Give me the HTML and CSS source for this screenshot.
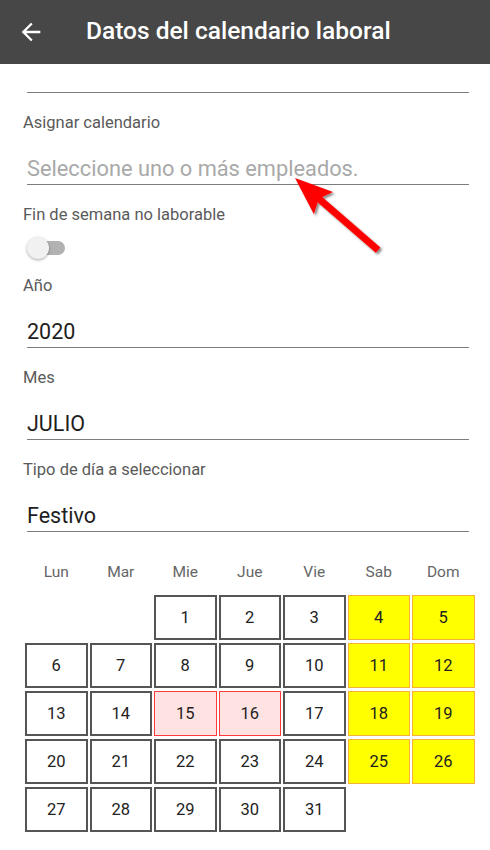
FILE: index.html
```html
<!DOCTYPE html>
<html lang="es">
<head>
<meta charset="utf-8">
<title>Datos del calendario laboral</title>
<link rel="stylesheet" href="styles.css">
</head>
<body>
<header class="appbar">
  <svg class="back" viewBox="0 0 24 24" width="28" height="28"><path fill="#fff" d="M20 11H7.83l5.59-5.59L12 4l-8 8 8 8 1.41-1.41L7.83 13H20v-2z"/></svg>
  <h1 class="title">Datos del calendario laboral</h1>
</header>
<main class="form">
  <div class="input empty"></div>

  <div class="label">Asignar calendario</div>
  <div class="input placeholder">Seleccione uno o más empleados.</div>

  <div class="label">Fin de semana no laborable</div>
  <div class="switch-row"><span class="switch"><span class="track"></span><span class="thumb"></span></span></div>

  <div class="label">Año</div>
  <div class="input">2020</div>

  <div class="label">Mes</div>
  <div class="input">JULIO</div>

  <div class="label">Tipo de día a seleccionar</div>
  <div class="input">Festivo</div>

  <div class="calendar">
    <div class="dow">Lun</div><div class="dow">Mar</div><div class="dow">Mie</div><div class="dow">Jue</div><div class="dow">Vie</div><div class="dow">Sab</div><div class="dow">Dom</div>
    <div class="blank"></div><div class="blank"></div>
    <div class="day">1</div><div class="day">2</div><div class="day">3</div><div class="day wk">4</div><div class="day wk">5</div>
    <div class="day">6</div><div class="day">7</div><div class="day">8</div><div class="day">9</div><div class="day">10</div><div class="day wk">11</div><div class="day wk">12</div>
    <div class="day">13</div><div class="day">14</div><div class="day hol">15</div><div class="day hol">16</div><div class="day">17</div><div class="day wk">18</div><div class="day wk">19</div>
    <div class="day">20</div><div class="day">21</div><div class="day">22</div><div class="day">23</div><div class="day">24</div><div class="day wk">25</div><div class="day wk">26</div>
    <div class="day">27</div><div class="day">28</div><div class="day">29</div><div class="day">30</div><div class="day">31</div>
  </div>
</main>
<svg class="pointer" viewBox="0 0 490 850" width="490" height="850">
  <defs>
    <filter id="sh" x="-20%" y="-20%" width="140%" height="140%">
      <feDropShadow dx="2" dy="2" stdDeviation="1.2" flood-color="#000" flood-opacity="0.45"/>
    </filter>
  </defs>
  <polygon filter="url(#sh)" fill="#ff0000" points="295,178 333,192 322.2,197 380.4,247.5 375.8,252.7 317.6,202.2 313.9,214.2"/>
</svg>
</body>
</html>
```
FILE: styles.css
```css
* { box-sizing: border-box; }
html, body { margin: 0; padding: 0; background: #fff; }
body {
  width: 490px;
  height: 850px;
  overflow: hidden;
  font-family: Roboto, "Noto Sans", "Liberation Sans", sans-serif;
  position: relative;
}
.appbar {
  height: 64px;
  background: #474747;
  display: flex;
  align-items: center;
  padding-left: 17px;
}
.back { display: block; flex: none; }
.title {
  margin: 0 0 0 41px;
  color: #fff;
  font-size: 24.5px;
  font-weight: 500;
  line-height: 28px;
  padding-bottom: 3px;
}
.form {
  padding: 0 21px 0 23px;
}
.label {
  margin-top: 20px;
  font-size: 16.5px;
  line-height: 20px;
  color: #5a5a5a;
}
.input {
  margin-left: 4px;
  padding: 23px 0 2px;
  line-height: 26px;
  height: 52px;
  font-size: 21.5px;
  color: #1e1e1e;
  border-bottom: 1px solid #7d7d7d;
}
.input.empty { height: 29px; padding: 0; }
.input.placeholder { color: #a9a9a9; font-size: 21.8px; }
.switch-row {
  height: 31px;
  padding-top: 12px;
  padding-left: 4px;
}
.switch { position: relative; width: 40px; height: 22px; display: block; }
.switch .track {
  position: absolute;
  left: 4px; top: 4px;
  width: 34px; height: 14px;
  border-radius: 7px;
  background: #b2b2b2;
}
.switch .thumb {
  position: absolute;
  left: 0; top: 0;
  width: 22px; height: 22px;
  border-radius: 50%;
  background: #f1f1f1;
  box-shadow: 0 1px 3px rgba(0,0,0,0.35);
}
.calendar {
  margin: 30px 0 0 2px;
  display: grid;
  grid-template-columns: repeat(7, 62.5px);
  column-gap: 2px;
  row-gap: 3px;
}
.dow {
  text-align: center;
  font-size: 15.5px;
  line-height: 20px;
  color: #666;
  margin-bottom: 10px;
}
.day {
  height: 45px;
  display: flex;
  align-items: center;
  justify-content: center;
  font-size: 16.5px;
  color: #222;
  border: 2px solid #555;
  background: #fff;
}
.day.wk { background: #ffff00; border: 1px solid #f8b23a; }
.day.hol { background: #ffe2e2; border: 1px solid #ff3a3a; }
.pointer {
  position: absolute;
  left: 0; top: 0;
  pointer-events: none;
}
```
